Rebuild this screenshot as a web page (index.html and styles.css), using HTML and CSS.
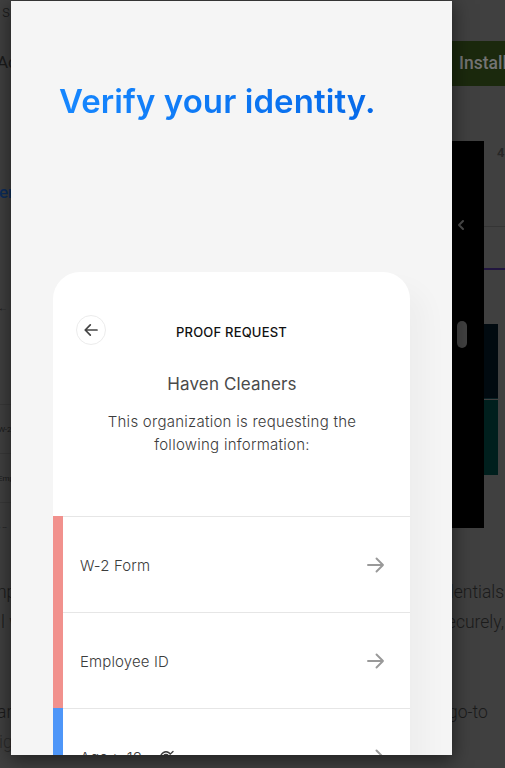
FILE: index.html
```html
<!DOCTYPE html>
<html lang="en">
<head>
<meta charset="utf-8">
<title>Verify your identity</title>
<link rel="stylesheet" href="styles.css">
</head>
<body>
<div class="backdrop">
  <div class="left">
    <div class="line intro">s</div>
    <div class="line account">Ac</div>
    <div class="thumb">
      <div class="thumb-title">er</div>
      <div class="thumb-arrow">←</div>
      <div class="thumb-row">W-2</div>
      <div class="thumb-row">Emp</div>
      <div class="thumb-row">› --</div>
    </div>
    <div class="line copy push">np</div>
    <div class="line copy inset">l w</div>
    <div class="line copy gap">ar</div>
    <div class="line copy faint">ig</div>
  </div>
  <div class="right">
    <div class="install">Install</div>
    <div class="shots">
      <div class="phone">
        <svg class="chevron" viewBox="0 0 8 12"><path d="M6 2 2 6l4 4"/></svg>
        <div class="knob"></div>
      </div>
      <div class="shot">
        <div class="shot-head">4</div>
        <div class="shot-tab"></div>
        <div class="navy"></div>
        <div class="teal"></div>
      </div>
    </div>
    <div class="line copy first">dentials</div>
    <div class="line copy second">securely,</div>
    <div class="line copy gap third">go-to</div>
  </div>
</div>
<main class="modal">
  <h1>Verify your identity.</h1>
  <section class="card">
    <header>
      <div class="back"><svg viewBox="0 0 14 14"><path d="M13 7H1.5M6.3 1.8 1.2 7l5.1 5.2"/></svg></div>
      <h2>PROOF REQUEST</h2>
    </header>
    <h3>Haven Cleaners</h3>
    <p>This organization is requesting the<br>following information:</p>
    <ul>
      <li><span>W-2 Form</span><svg class="go" viewBox="0 0 18 16"><path d="M1 8h15M9.5 1.5 16 8l-6.5 6.5"/></svg></li>
      <li><span>Employee ID</span><svg class="go" viewBox="0 0 18 16"><path d="M1 8h15M9.5 1.5 16 8l-6.5 6.5"/></svg></li>
      <li class="blue"><span>Age &gt; 18</span><svg class="eye" viewBox="0 0 16 14"><path d="M1 7c3-7 9-7 12 0-3 6-9 6-12 0M3 12 14 1.5"/><circle cx="7" cy="7" r="2.5"/></svg><svg class="go" viewBox="0 0 18 16"><path d="M1 8h15M9.5 1.5 16 8l-6.5 6.5"/></svg></li>
    </ul>
  </section>
</main>
</body>
</html>
```
FILE: styles.css
```css
* { box-sizing: border-box; }
body { margin: 0; background: #404040; overflow: hidden; font-family: Inter, sans-serif; }
h1, h2, h3, p, ul { margin: 0; padding: 0; font-weight: 400; }
svg { display: block; fill: none; stroke: currentColor; stroke-linecap: round; stroke-linejoin: round; }

.backdrop { display: flex; justify-content: space-between; height: 768px; font-family: Roboto, sans-serif; color: #1b1b1b; }
.left { width: 24px; overflow: hidden; white-space: nowrap; }
.right { width: 53px; overflow: hidden; white-space: nowrap; }
.line { height: 30px; line-height: 30px; font-size: 17.5px; }
.intro { margin: -3px 0 0 2px; font-weight: 300; font-size: 16px; }
.account { margin: 20px 0 0 -3px; font-size: 17px; }
.thumb { height: 450px; margin-top: 63px; }
.thumb-title { height: 106px; padding-top: 42px; font-size: 17px; line-height: 20px; font-weight: 500; color: #0c2d5c; margin-left: -1px; }
.thumb-arrow { height: 158px; padding-top: 57px; font-size: 10px; line-height: 10px; margin-left: -2px; }
.thumb-row { height: 49px; line-height: 49px; margin-left: -2px; font-size: 8px; border-top: 1px solid #393939; }
.copy { font-weight: 300; }
.left .copy { margin-left: -3px; }
.left .inset { margin-left: 1px; }
.push { margin-top: -13px; }
.left .gap, .right .gap { margin-top: 60px; }
.left .faint { margin-left: -1px; color: #2a2a2a; }

.install { height: 45px; margin-top: 41px; padding-left: 7px; line-height: 45px; font-size: 17.5px; font-weight: 500; background: #1b290d; color: #747474; }
.shots { display: flex; height: 387px; margin-top: 55px; }
.phone { width: 32px; background: #000; padding-top: 78px; color: #4b4b4b; }
.chevron { width: 8px; height: 12px; margin-left: 5px; stroke-width: 2; }
.knob { width: 10px; height: 27px; margin: 90px 0 0 5px; border-radius: 5px; background: #424242; }
.shot { flex: 1; }
.shot-head { height: 86px; padding-left: 13px; line-height: 24px; font-size: 13px; font-weight: 700; color: #272727; border-bottom: 1px solid #353535; }
.shot-tab { height: 43px; border-bottom: 2px solid #21153f; }
.navy { width: 14px; height: 75px; margin-top: 54px; background: #010a10; border-bottom: 1px solid #092024; }
.teal { width: 14px; height: 75px; margin-top: 1px; background: #001f1d; }
.first { margin: 49px 0 0 -8px; }
.second { margin-left: -14px; }
.third { margin-left: -4px; }

.modal { position: absolute; left: 11px; top: 1px; width: 441px; height: 754px; overflow: hidden; padding-left: 42px; background: #f5f5f5; }
.backdrop::after { content: ""; position: absolute; left: 11px; top: 1px; width: 441px; height: 754px; box-shadow: 0 4px 18px 1px rgba(0, 0, 0, .5); }
h1 { width: 330px; margin: 78px 0 0 6px; font-size: 33px; line-height: 44px; font-weight: 600; letter-spacing: .08px; white-space: nowrap; background: linear-gradient(90deg, #1687ff, #0568e8); background-clip: text; -webkit-background-clip: text; color: transparent; }
.card { width: 357px; height: 520px; margin-top: 149px; padding-top: 43px; border-radius: 27px 27px 0 0; background: #fff; box-shadow: 16px 16px 26px rgba(0, 0, 0, .03); }
header { display: grid; grid-template-columns: 1fr auto 1fr; height: 31px; padding-left: 23px; padding-right: 23px; }
.back { display: grid; place-items: center; width: 30px; height: 30px; border: 1px solid #ececec; border-radius: 50%; color: #444; }
.back svg { width: 14px; height: 14px; margin-top: -1px; stroke-width: 1.7; }
h2 { padding-top: 7px; font-size: 13px; line-height: 20px; font-weight: 500; letter-spacing: .2px; color: #111; }
h3 { margin-top: 26px; padding-left: 1px; text-align: center; font-size: 17px; line-height: 24px; letter-spacing: .15px; color: #4a4a4a; }
p { margin-top: 14px; padding-left: 1px; text-align: center; font-size: 15px; line-height: 23px; font-weight: 300; letter-spacing: .26px; color: #3c3c3c; }
ul { list-style: none; margin-top: 60px; }
li { display: flex; align-items: center; height: 96px; padding: 2px 25px 0 17px; border-left: 10px solid #f1918d; background: linear-gradient(#e6e6e6, #e6e6e6) top / 100% 1px no-repeat border-box; font-size: 15px; font-weight: 300; letter-spacing: .13px; color: #3c3c3c; }
.blue { border-left-color: #4e96f8; }
.go { width: 18px; height: 16px; margin: -1px 0 0 auto; color: #999; stroke-width: 1.9; }
.eye { width: 16px; height: 14px; margin-left: 17px; stroke-width: 1.3; }
```
